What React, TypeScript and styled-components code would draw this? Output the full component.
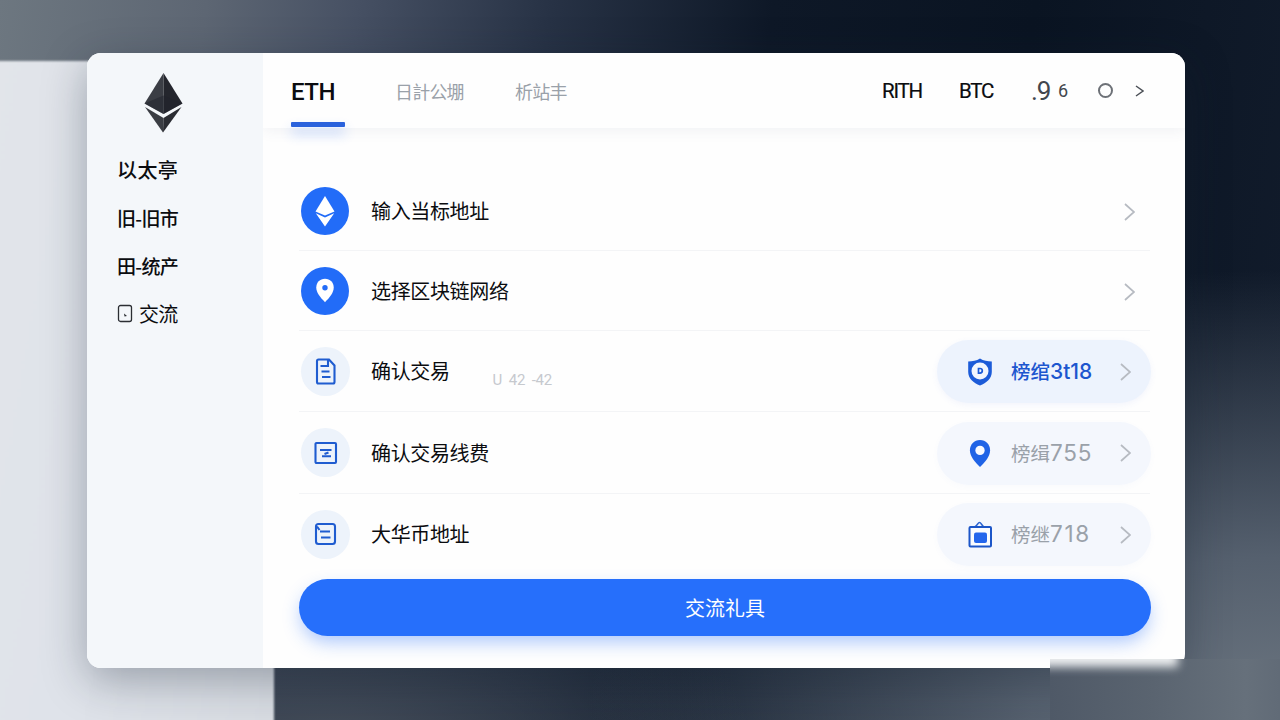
import type { ReactNode } from "react";
import styled, { createGlobalStyle, ThemeProvider } from "styled-components";

const theme = {
  color: {
    blue: "#226cf8",
    blueDeep: "#1c56cf",
    ink: "#0b0c0f",
    muted: "#9aa1a9",
    side: "#f4f7fa",
    line: "#f3f4f6",
  },
  font: '"Noto Sans CJK SC", sans-serif',
  latin: 'Roboto, "Noto Sans CJK SC", sans-serif',
};

const GlobalStyle = createGlobalStyle`
  * { box-sizing: border-box; }
  body {
    margin: 0;
    font-family: ${theme.font};
    color: ${theme.color.ink};
  }
`;

const Backdrop = styled.div`
  position: relative;
  width: 1280px;
  height: 720px;
  padding: 53px 0 0 87px;
  overflow: hidden;
  background:
    radial-gradient(ellipse 680px 440px at 1270px 710px, #6a747f 0%, rgba(92, 103, 117, 0.9) 35%, rgba(60, 72, 88, 0) 100%),
    radial-gradient(ellipse 420px 200px at 330px 740px, #434c59 0%, rgba(50, 60, 74, 0) 100%),
    linear-gradient(180deg, rgba(26, 37, 53, 0) 80%, rgba(26, 37, 53, 0.7) 100%),
    linear-gradient(98deg, #6d7780 0%, #5d6673 15%, #465063 26%, #273245 40%, #0e1827 56%, #0a1422 75%, #121c2c 100%);
`;

const PaleSheet = styled.div`
  position: absolute;
  left: -4px;
  top: 61px;
  width: 278px;
  height: 670px;
  background: linear-gradient(100deg, #e2e5ea 0%, #dfe3ea 50%, #d8dce2 100%);
  filter: blur(0.8px);
`;

const Card = styled.div`
  position: relative;
  display: flex;
  width: 1098px;
  height: 615px;
  border-radius: 14px;
  overflow: hidden;
  background: #fefefe;
`;

const CardShadow = styled.div`
  position: relative;
  width: 1098px;
  border-radius: 14px;
  box-shadow: 0 12px 44px rgba(20, 32, 50, 0.34);
`;

const Sidebar = styled.aside`
  position: relative;
  z-index: 1;
  display: flex;
  flex-direction: column;
  width: 176px;
  padding: 19px 0 0 30px;
  background: ${({ theme }) => theme.color.side};
`;

const LogoBox = styled.div`
  height: 62px;
  padding-left: 26px;
`;

const SideItem = styled.div<{ $light?: boolean; $tight?: boolean }>`
  display: flex;
  align-items: center;
  gap: 6px;
  height: 48px;
  font-size: ${({ $tight }) => ($tight ? "19px" : "20px")};
  font-weight: ${({ $light }) => ($light ? 400 : 500)};
  letter-spacing: ${({ $tight, $light }) => ($tight ? "-0.7px" : $light ? "-0.8px" : "0.4px")};
  white-space: nowrap;
`;

const SideNav = styled.nav`
  margin-top: 11px;
`;

const Main = styled.main`
  flex: 1;
  display: flex;
  flex-direction: column;
`;

const Header = styled.header`
  display: flex;
  align-items: stretch;
  height: 75px;
  padding: 0 41px 0 28px;
  background: #fefefe;
  box-shadow: 0 2px 14px rgba(60, 80, 120, 0.08);
  font-family: ${({ theme }) => theme.latin};
`;

const Tab = styled.div<{ $active?: boolean; $width: number }>`
  display: flex;
  align-items: center;
  width: ${({ $width }) => $width}px;
  margin-right: 50px;
  padding-top: ${({ $active }) => ($active ? "8px" : "0")};
  font-size: ${({ $active }) => ($active ? "24px" : "18px")};
  font-weight: ${({ $active }) => ($active ? 500 : 400)};
  letter-spacing: ${({ $active }) => ($active ? "-0.5px" : "-0.8px")};
  white-space: nowrap;
  color: ${({ theme, $active }) => ($active ? theme.color.ink : theme.color.muted)};
`;

const ActiveTab = styled.div`
  display: flex;
  flex-direction: column;
  justify-content: space-between;

  &::after {
    content: "";
    width: 54px;
    height: 5px;
    margin-bottom: 1px;
    border-radius: 1px;
    background: #2a62dc;
    box-shadow: 0 7px 12px rgba(40, 110, 250, 0.3);
  }
`;

const ActiveLabel = styled(Tab)`
  flex: 1;
`;

const HeaderTools = styled.div`
  display: flex;
  align-items: center;
  margin-left: auto;
`;

const Coin = styled.span<{ $width: number }>`
  width: ${({ $width }) => $width}px;
  font-size: 20.5px;
  letter-spacing: -1.2px;
  -webkit-text-stroke: 0.2px;
`;

const Count = styled.span<{ $size: number; $width: number }>`
  width: ${({ $width }) => $width}px;
  font-size: ${({ $size }) => $size}px;
  line-height: 28px;
  letter-spacing: -1px;
  color: #42464d;
`;

const Ring = styled.span`
  width: 15px;
  height: 15px;
  margin-right: 22px;
  border: 2px solid #6d7177;
  border-radius: 50%;
`;

const Content = styled.div`
  display: flex;
  flex-direction: column;
  padding: 43px 35px 0 36px;
`;

const Row = styled.div<{ $height: number }>`
  display: flex;
  align-items: center;
  height: ${({ $height }) => $height}px;
  padding-left: 2px;
  border-bottom: 1px solid ${({ theme }) => theme.color.line};

  &:last-of-type {
    border-bottom-color: transparent;
  }
`;

const IconDisc = styled.div<{ $solid?: boolean }>`
  display: flex;
  align-items: center;
  justify-content: center;
  width: ${({ $solid }) => ($solid ? 48 : 49)}px;
  height: ${({ $solid }) => ($solid ? 48 : 49)}px;
  margin-right: ${({ $solid }) => ($solid ? 22 : 21)}px;
  border-radius: 50%;
  background: ${({ theme, $solid }) => ($solid ? theme.color.blue : "#edf3fb")};
`;

const RowLabel = styled.span`
  font-size: 20px;
  line-height: 28px;
  letter-spacing: -0.35px;
  white-space: nowrap;
`;

const Note = styled.span`
  margin: 17px 0 0 43px;
  font-family: ${({ theme }) => theme.latin};
  font-size: 15px;
  letter-spacing: -0.2px;
  word-spacing: 3px;
  color: #c6c9ce;
`;

const Trailing = styled.div`
  display: flex;
  margin-left: auto;
  padding: 3px 15px 0 0;
`;

const Pill = styled.div<{ $active?: boolean }>`
  display: flex;
  align-items: center;
  width: 214px;
  height: 63px;
  margin: 1px -1px 0 auto;
  padding: 0 20px 0 30px;
  border-radius: 32px;
  background: ${({ $active }) => ($active ? "#edf3fd" : "#f4f7fd")};
  box-shadow: 0 2px 6px rgba(80, 120, 220, ${({ $active }) => ($active ? 0.07 : 0.03)});
`;

const PillText = styled.span<{ $active?: boolean }>`
  flex: 1;
  margin: -1px 0 0 18px;
  font-family: ${({ theme }) => theme.font};
  font-size: 19.5px;
  font-weight: ${({ $active }) => ($active ? 500 : 400)};
  line-height: 28px;
  white-space: nowrap;
  color: ${({ theme, $active }) => ($active ? theme.color.blueDeep : theme.color.muted)};
`;

const Digits = styled.span<{ $spacing: number; $size: number }>`
  font-family: Inter, sans-serif;
  font-size: ${({ $size }) => $size}px;
  letter-spacing: ${({ $spacing }) => $spacing}px;
`;

const Submit = styled.button`
  height: 57px;
  margin: 4px -1px 0 0;
  border: 0;
  border-radius: 29px;
  background: #266ffb;
  box-shadow: 0 8px 18px -2px rgba(38, 111, 251, 0.38);
  color: #fff;
  font-family: inherit;
  font-size: 20px;
  line-height: 28px;
`;

const Smudge = styled.div`
  position: absolute;
  left: 1050px;
  top: 659px;
  width: 230px;
  height: 61px;
  overflow: hidden;
  background: linear-gradient(90deg, #4f5967 0%, #5a6470 45%, #66707b 85%, #616b77 100%);

  &::before {
    content: "";
    position: absolute;
    left: -20px;
    top: -14px;
    width: 148px;
    height: 22px;
    background: #eceef0;
    filter: blur(5px);
  }
`;

function EthLogo() {
  return (
    <svg width="40" height="62" viewBox="0 0 40 62">
      <path d="M20.5 1 1.5 31.5 20.5 42Z" fill="#3b3e45" />
      <path d="M20.5 1 39.5 31.5 20.5 42Z" fill="#24262d" />
      <path d="m1.5 31.5 19-8 19 8-19 10.5Z" fill="#20222b" opacity=".5" />
      <path d="M2 35 20.5 46 20 60.5Z" fill="#3a3d43" />
      <path d="M38.5 35 20.5 46 20 60.5Z" fill="#2a2c32" />
    </svg>
  );
}

function EthGlyph() {
  return (
    <svg width="20" height="32" viewBox="0 0 20 32">
      <path d="M10 1 19.5 16.5 10 20.5.5 16.5Z" fill="#fff" />
      <path d="M.8 18.300 10 22.500 19.2 18.300 10 31.5Z" fill="#fff" />
    </svg>
  );
}

function PinIcon({ width, height, fill, hole, holeSize }: {
  width: number;
  height: number;
  fill: string;
  hole: string;
  holeSize: number;
}) {
  return (
    <svg width={width} height={height} viewBox="0 0 20 26">
      <path d="M10 0C4.3 0 .3 4.2.3 9.8.3 15.5 4.8 21 10 26c5.200-5 9.700-10.500 9.700-16.200C19.700 4.200 15.700 0 10 0Z" fill={fill} />
      <circle cx="10" cy="10" r={holeSize} fill={hole} />
    </svg>
  );
}

function DocIcon() {
  return (
    <svg width="22" height="27" viewBox="0 0 22 27" fill="none" stroke="#1f5cd0" strokeWidth="2.1">
      <path d="M3.500 1.500H14l5.500 6v16.500a1.500 1.500 0 0 1-1.500 1.500H3.500a1.500 1.500 0 0 1-1.500-1.500V3a1.500 1.500 0 0 1 1.500-1.500Z" />
      <path d="M13 2v6H5.500M6.500 13.500h8M7 19h8.500" />
    </svg>
  );
}

function FormIcon() {
  return (
    <svg width="24" height="24" viewBox="0 0 24 24" fill="none" stroke="#1f5cd0" strokeWidth="2.1">
      <rect x="1.500" y="2" width="20.500" height="20" rx="1" />
      <path d="M6 9h11.500M10.500 13l4-1.500M8 15.200h9" />
    </svg>
  );
}

function ListIcon() {
  return (
    <svg width="24" height="24" viewBox="0 0 24 24" fill="none" stroke="#1f5cd0" strokeWidth="2.1">
      <rect x="2" y="2" width="19" height="20" rx="2.500" />
      <path d="M3 4.500 5.500 8M6 9.500H16M7 15.500h9.500" />
    </svg>
  );
}

function ShieldIcon() {
  return (
    <svg width="26" height="28" viewBox="0 0 26 28">
      <path d="M13 .5C9.500 2.700 5.500 3.500 1.200 3.500V14c0 6.500 5.300 10.800 11.800 13.500C19.500 24.800 24.800 20.500 24.800 14V3.500C20.500 3.500 16.500 2.700 13 .5Z" fill="#1c5bd8" />
      <circle cx="13" cy="13" r="8.500" fill="#f2f6fe" />
      <path d="M11.500 10.500h1.500a2.300 2.300 0 0 1 0 4.600h-1.500Z" fill="none" stroke="#1c5bd8" strokeWidth="1.700" />
    </svg>
  );
}

function BagIcon() {
  return (
    <svg width="26" height="28" viewBox="0 0 26 28">
      <path d="M8 5.500c2-.5 3-4 4.500-4S14.500 4 16.500 5.500" fill="none" stroke="#2a63cf" strokeWidth="1.500" />
      <rect x="2.500" y="6" width="21.500" height="19.500" rx="1" fill="#fafcff" stroke="#1c56c8" strokeWidth="2" />
      <rect x="7" y="11.500" width="13" height="10.500" rx="2" fill="#2466ec" />
    </svg>
  );
}

function Chevron({ width = 11, height = 18, color = "#b7bbc2", stroke = 1.7 }) {
  return (
    <svg width={width} height={height} viewBox={`0 0 ${width} ${height}`}>
      <path
        d={`M1 1 ${width - 1} ${height / 2} 1 ${height - 1}`}
        fill="none"
        stroke={color}
        strokeWidth={stroke}
      />
    </svg>
  );
}

function TileIcon() {
  return (
    <svg width="16" height="19" viewBox="0 0 16 19">
      <rect x="1.500" y="1.500" width="13" height="16" rx="2" fill="none" stroke="#2b2e33" strokeWidth="1.300" />
      <path d="m7 9.500 3 2.500L7.500 12.500Z" fill="#2b2e33" />
    </svg>
  );
}

type RowData = {
  label: string;
  icon: ReactNode;
  height: number;
  solid?: boolean;
  note?: string;
  pill?: {
    icon: ReactNode;
    text: string;
    digits: string;
    size: number;
    spacing: number;
    active?: boolean;
  };
};

const rows: RowData[] = [
  { label: "输入当标地址", icon: <EthGlyph />, height: 80, solid: true },
  {
    label: "选择区块链网络",
    icon: <PinIcon width={18} height={25} fill="#fff" hole="#226cf8" holeSize={3} />,
    height: 80,
    solid: true,
  },
  {
    label: "确认交易",
    icon: <DocIcon />,
    height: 81,
    note: "U 42 -42",
    pill: { icon: <ShieldIcon />, text: "榜绾", digits: "3t18", size: 21, spacing: 0, active: true },
  },
  {
    label: "确认交易线费",
    icon: <FormIcon />,
    height: 82,
    pill: {
      icon: <PinIcon width={26} height={27} fill="#1f63e6" hole="#f6f9ff" holeSize={4.5} />,
      text: "榜缉",
      digits: "755",
      size: 22.5,
      spacing: 0.8,
    },
  },
  {
    label: "大华币地址",
    icon: <ListIcon />,
    height: 81,
    pill: { icon: <BagIcon />, text: "榜继", digits: "718", size: 22.5, spacing: 1.7 },
  },
];

export default function App() {
  return (
    <ThemeProvider theme={theme}>
      <GlobalStyle />
      <Backdrop>
        <PaleSheet />
        <CardShadow>
          <Card>
            <Sidebar>
              <LogoBox>
                <EthLogo />
              </LogoBox>
              <SideNav>
                <SideItem>以太亭</SideItem>
                <SideItem $tight>旧-旧市</SideItem>
                <SideItem $tight>田-统产</SideItem>
                <SideItem $light>
                  <TileIcon />
                  交流
                </SideItem>
              </SideNav>
            </Sidebar>
            <Main>
              <Header>
                <ActiveTab>
                  <ActiveLabel $active $width={54}>ETH</ActiveLabel>
                </ActiveTab>
                <Tab $width={70}>日計公堋</Tab>
                <Tab $width={54}>析站丰</Tab>
                <HeaderTools>
                  <Coin $width={77}>RITH</Coin>
                  <Coin $width={72}>BTC</Coin>
                  <Count $size={26} $width={27}>.9</Count>
                  <Count $size={18} $width={40}>6</Count>
                  <Ring />
                  <Chevron width={9} height={12} color="#4c5057" stroke={1.5} />
                </HeaderTools>
              </Header>
              <Content>
                {rows.map((row) => (
                  <Row key={row.label} $height={row.height}>
                    <IconDisc $solid={row.solid}>{row.icon}</IconDisc>
                    <RowLabel>{row.label}</RowLabel>
                    {row.note && <Note>{row.note}</Note>}
                    {row.pill ? (
                      <Pill $active={row.pill.active}>
                        {row.pill.icon}
                        <PillText $active={row.pill.active}>
                          {row.pill.text}
                          <Digits $size={row.pill.size} $spacing={row.pill.spacing}>
                            {row.pill.digits}
                          </Digits>
                        </PillText>
                        <Chevron />
                      </Pill>
                    ) : (
                      <Trailing>
                        <Chevron />
                      </Trailing>
                    )}
                  </Row>
                ))}
                <Submit>交流礼具</Submit>
              </Content>
            </Main>
          </Card>
        </CardShadow>
        <Smudge />
      </Backdrop>
    </ThemeProvider>
  );
}
